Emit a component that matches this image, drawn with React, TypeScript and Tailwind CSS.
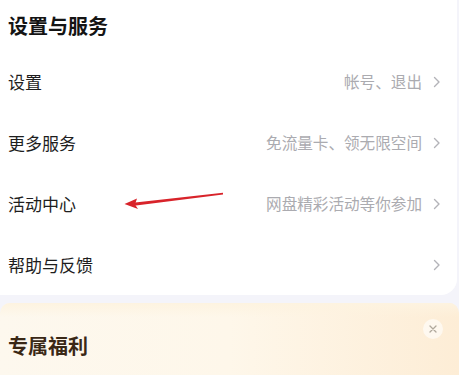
import React from "react";

const rows: { label: string; hint: string }[] = [
  { label: "设置", hint: "帐号、退出" },
  { label: "更多服务", hint: "免流量卡、领无限空间" },
  { label: "活动中心", hint: "网盘精彩活动等你参加" },
  { label: "帮助与反馈", hint: "" },
];

function Chevron() {
  return (
    <svg width="8" height="12" viewBox="0 0 8 12" className="ml-[11px] shrink-0">
      <path d="M1.5 1.5 L6 6 L1.5 10.5" fill="none" stroke="#b3b3b8" strokeWidth="1.4" strokeLinecap="round" strokeLinejoin="round" />
    </svg>
  );
}

export default function App() {
  return (
    <div
      className="relative w-[459px] h-[375px] overflow-hidden bg-[#f4f4fa]"
      style={{ fontFamily: '"Noto Sans CJK SC", "Noto Sans", sans-serif' }}
    >
      <div className="bg-white mr-[2px] rounded-br-[16px]">
        <div className="h-[51px] flex items-center pl-[8px]">
          <span className="text-[20px] font-bold text-[#141414] leading-none">设置与服务</span>
        </div>
        {rows.map((r) => (
          <div key={r.label} className="h-[61px] flex items-center pl-[8px] pr-[16px]">
            <span className="text-[17px] text-[#1e1e1e] leading-none">{r.label}</span>
            <div className="flex-1" />
            {r.hint && <span className="text-[15.6px] text-[#ababb0] leading-none">{r.hint}</span>}
            <Chevron />
          </div>
        ))}
      </div>
      <div className="mt-[8px] h-[80px] rounded-t-[10px] bg-gradient-to-r from-[#fdf8ee] via-[#fef7ea] to-[#fdedd6] relative">
        <div className="absolute inset-x-0 top-0 h-[14px] bg-gradient-to-b from-[#fdf3e0] to-transparent rounded-t-[10px]" />
        <div className="relative pt-[32px] pl-[8px]">
          <span className="text-[20px] font-bold text-[#3a2816] leading-none">专属福利</span>
        </div>
        <div className="absolute right-[16px] top-[16px] w-[20px] h-[20px] rounded-full bg-white/60 flex items-center justify-center">
          <svg width="8" height="8" viewBox="0 0 8 8">
            <path d="M1 1 L7 7 M7 1 L1 7" stroke="#b0a89c" strokeWidth="1.3" strokeLinecap="round" />
          </svg>
        </div>
      </div>
      <svg className="absolute left-0 top-0 pointer-events-none" width="459" height="375" viewBox="0 0 459 375">
        <polygon points="223,192.8 223,194.4 134,205.8 133,202.8" fill="#d8232a" />
        <polygon points="124.5,204 137,198.5 135,204.5 138,209" fill="#d8232a" />
      </svg>
    </div>
  );
}
